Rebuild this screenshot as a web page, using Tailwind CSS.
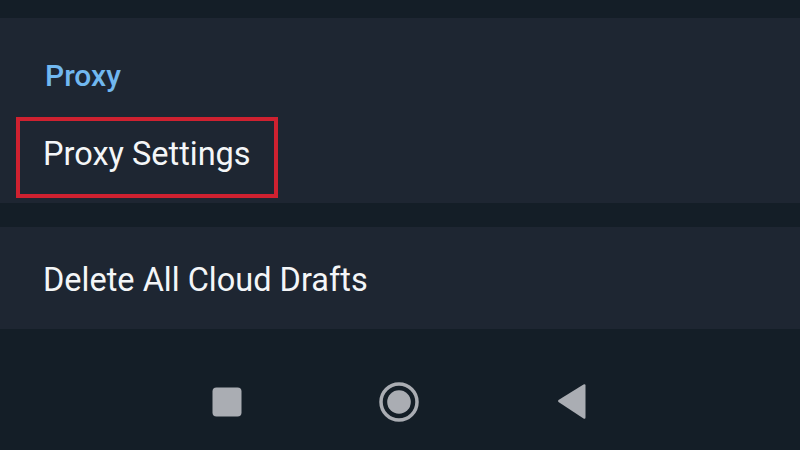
<!DOCTYPE html>
<html lang="en">
<head>
    <meta charset="UTF-8">
    <title>Proxy Settings</title>
    <script src="https://cdn.jsdelivr.net/npm/@tailwindcss/browser@4"></script>
</head>
<body class="w-[800px] h-[450px] overflow-hidden bg-[#141e27] font-['Roboto',sans-serif]">
    <div class="h-[18px]"></div>

    <!-- Proxy section -->
    <section class="relative h-[185px] bg-[#1e2632]">
        <h2 class="pl-[45px] pt-[40px] text-[30px] leading-[36px] font-medium text-[#71b8f0]">Proxy</h2>
        <div class="pl-[43px] pt-[38px] text-[32.5px] leading-[44px] text-[#f4f6f8]">Proxy Settings</div>
        <!-- red highlight -->
        <div class="absolute left-[16px] top-[99px] w-[262px] h-[81px] border-4 border-[#cf2130]"></div>
    </section>

    <div class="h-[24px]"></div>

    <section class="h-[102px] bg-[#1e2632] flex items-center pl-[43px] pt-[3px]">
        <span class="text-[32.5px] leading-[44px] text-[#f4f6f8]">Delete All Cloud Drafts</span>
    </section>

    <!-- Nav bar -->
    <nav class="h-[121px] relative">
        <svg class="absolute left-[212px] top-[58px]" width="30" height="30" viewBox="0 0 30 30"><rect x="0.5" y="0.5" width="29" height="29" rx="4" fill="#aaadb3"/></svg>
        <svg class="absolute left-[379px] top-[53px]" width="40" height="40" viewBox="0 0 40 40"><circle cx="20" cy="20" r="18" fill="none" stroke="#aaadb3" stroke-width="3.5"/><circle cx="20" cy="20" r="11.8" fill="#aaadb3"/></svg>
        <svg class="absolute left-[557px] top-[54px]" width="30" height="38" viewBox="0 0 30 38"><path d="M26.5 1.5 L1.5 17 Q0.5 18 1.5 19 L26.5 35.5 Q28.5 36.5 28.5 34.5 L28.5 2.5 Q28.5 0.5 26.5 1.5 Z" fill="#aaadb3"/></svg>
    </nav>
</body>
</html>
